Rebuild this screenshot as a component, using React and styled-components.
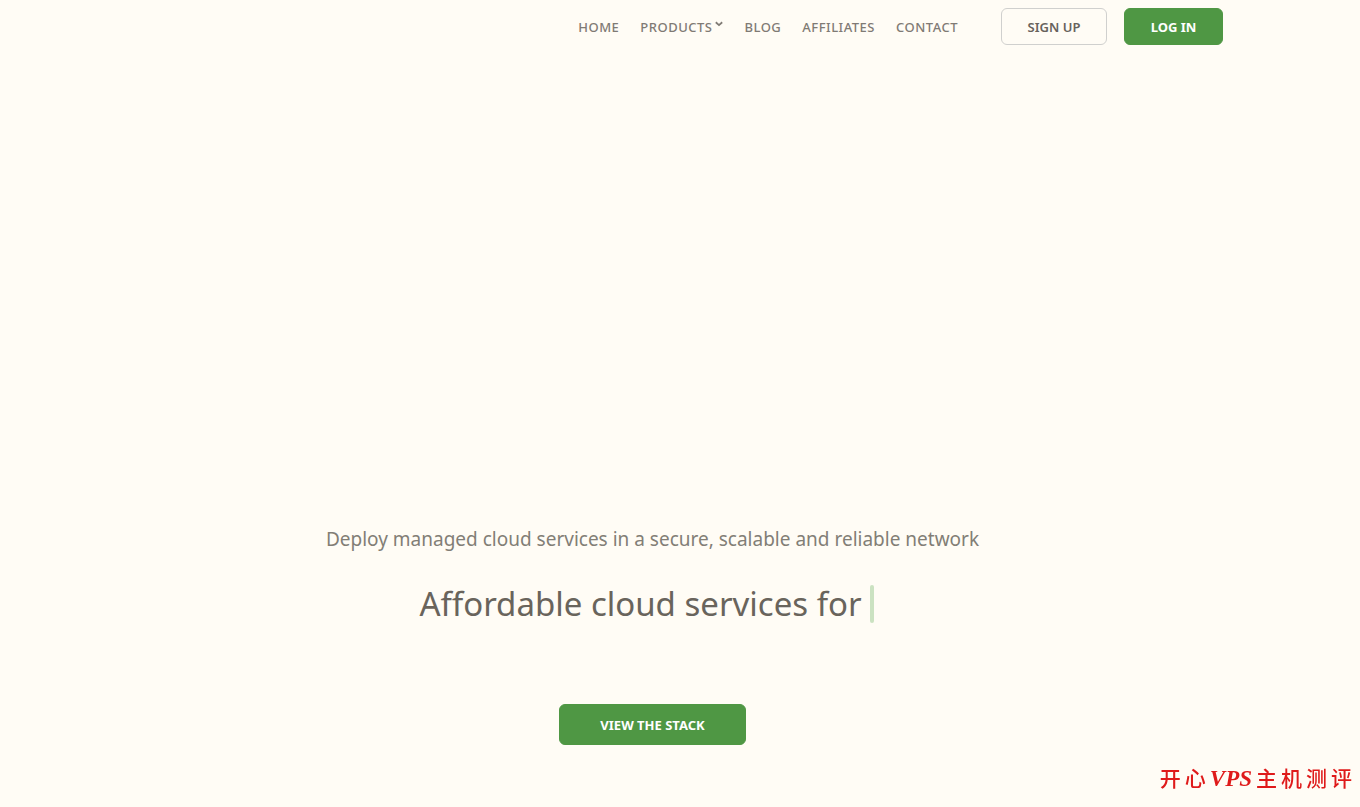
import React from 'react';
import styled, { createGlobalStyle } from 'styled-components';

const GlobalStyle = createGlobalStyle`
	* {
		box-sizing: border-box;
	}
	body {
		margin: 0;
		background: #fffcf5;
		font-family: 'Noto Sans', 'Open Sans', sans-serif;
	}
`;

const Page = styled.div`
	min-height: 100vh;
	display: flex;
	flex-direction: column;
	padding-right: 55px;
`;

const Header = styled.header`
	width: 100%;
	max-width: 1141px;
	margin: 0 auto;
	padding-top: 8px;
	display: flex;
	justify-content: flex-end;
	align-items: center;
`;

const Nav = styled.nav`
	display: flex;
	gap: 21px;
	margin-right: 43px;
`;

const NavLink = styled.a`
	display: flex;
	gap: 3px;
	color: #7f7a74;
	font-size: 13px;
	font-weight: 500;
	line-height: 18px;
	letter-spacing: 0.5px;
	text-decoration: none;
`;

const Chevron = styled.svg`
	width: 8px;
	height: 6px;
	margin-top: 3px;
`;

const Button = styled.button`
	width: ${(props) => props.$width};
	height: ${(props) => props.$height};
	padding: 0;
	border: 1px solid ${(props) => (props.$outline ? '#d0d0ce' : '#4f9744')};
	border-radius: 6px;
	background: ${(props) => (props.$outline ? 'transparent' : '#4f9744')};
	color: ${(props) => (props.$outline ? '#67625c' : '#ffffff')};
	font-family: inherit;
	font-size: 13px;
	font-weight: ${(props) => (props.$outline ? 600 : 700)};
	line-height: 18px;
`;

const Actions = styled.div`
	display: flex;
	gap: 17px;
`;

const Hero = styled.main`
	flex: 1;
	display: flex;
	flex-direction: column;
	align-items: center;
	padding-top: 480px;
`;

const Lead = styled.p`
	margin: 0;
	color: #827e76;
	font-size: 19px;
	line-height: 28px;
`;

const Title = styled.h1`
	display: flex;
	align-items: center;
	gap: 8px;
	margin: 32px 0 81px;
	padding-right: 12px;
	color: #69645c;
	font-size: 33px;
	font-weight: 400;
	line-height: 38px;
`;

const Cursor = styled.span`
	width: 4px;
	height: 38px;
	border-radius: 2px;
	background: #cbe2c1;
`;

const Watermark = styled.div`
	position: fixed;
	right: 8px;
	bottom: 12px;
	display: flex;
	align-items: center;
	gap: 4px;
	color: #df1a1a;
	font-family: 'Liberation Serif', 'Noto Sans CJK SC', serif;
	font-size: 21px;
	font-weight: 500;
	line-height: 32px;
`;

const Latin = styled.span`
	font-size: 23px;
	font-style: italic;
	font-weight: 700;
`;

const links = ['HOME', 'PRODUCTS', 'BLOG', 'AFFILIATES', 'CONTACT'];

const App = () => {
	return (
		<React.Fragment>
			<GlobalStyle />
			<Page>
				<Header>
					<Nav>
						{links.map((link) => (
							<NavLink key={link} href='#'>
								{link}
								{link === 'PRODUCTS' && (
									<Chevron viewBox='0 0 8 6' aria-hidden='true'>
										<path
											d='M0.8 1.3 L4 4.1 L7.2 1.3'
											fill='none'
											stroke='currentColor'
											strokeWidth='1.8'
										/>
									</Chevron>
								)}
							</NavLink>
						))}
					</Nav>
					<Actions>
						<Button $outline $width='106px' $height='37px'>
							SIGN UP
						</Button>
						<Button $width='99px' $height='37px'>
							LOG IN
						</Button>
					</Actions>
				</Header>
				<Hero>
					<Lead>
						Deploy managed cloud services in a secure, scalable and reliable
						network
					</Lead>
					<Title>
						Affordable cloud services for
						<Cursor />
					</Title>
					<Button $width='187px' $height='41px'>
						VIEW THE STACK
					</Button>
				</Hero>
			</Page>
			<Watermark>
				<span>开</span>
				<span>心</span>
				<Latin>VPS</Latin>
				<span>主</span>
				<span>机</span>
				<span>测</span>
				<span>评</span>
			</Watermark>
		</React.Fragment>
	);
};

export default App;
